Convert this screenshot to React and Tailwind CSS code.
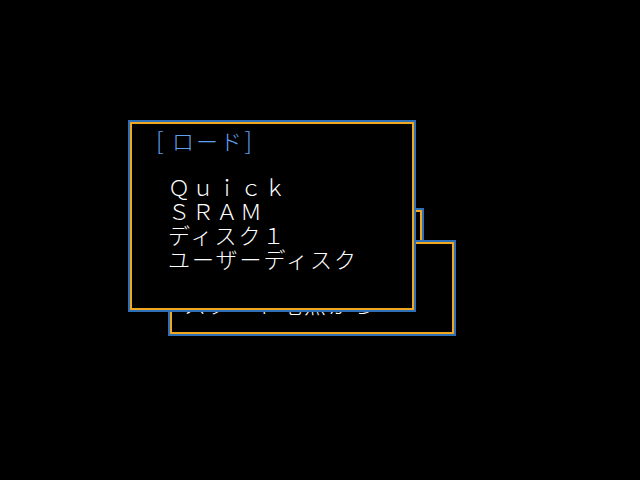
const Window = ({ className, children }) => (
  <div className={`absolute border-2 border-[#2f6fb5] ${className}`}>
    <div className="h-full w-full border-2 border-[#f0a820] bg-black">
      {children}
    </div>
  </div>
);

const jp = { fontFamily: '"Noto Sans CJK JP", "Noto Sans", sans-serif' };

const items = ["Ｑｕｉｃｋ", "ＳＲＡＭ", "ディスク１", "ユーザーディスク"];

export default function App() {
  return (
    <div
      className="relative h-[480px] w-[640px] overflow-hidden bg-black text-[22px] leading-[24px] tracking-[2px] font-light text-white"
      style={jp}
    >
      {/* back windows */}
      <Window className="left-[168px] top-[208px] h-[96px] w-[256px]" />
      <Window className="left-[168px] top-[240px] h-[96px] w-[288px]">
        <div className="pl-[12px] pt-[47px] whitespace-nowrap">スタート地点から</div>
      </Window>

      {/* load menu */}
      <Window className="left-[128px] top-[120px] h-[192px] w-[288px]">
        <div className="flex flex-col gap-[22px] pl-[24px] pt-[4px] whitespace-nowrap">
          <div className="flex text-[#60a0f0]">
            <span className="w-[14px] text-[24px]">[</span>
            <span className="ml-[2px]">ロード</span>
            <span className="w-[10px] text-right text-[24px]">]</span>
          </div>
          <div className="flex flex-col pl-[12px]">
            {items.map((item) => (
              <div key={item}>{item}</div>
            ))}
          </div>
        </div>
      </Window>
    </div>
  );
}
